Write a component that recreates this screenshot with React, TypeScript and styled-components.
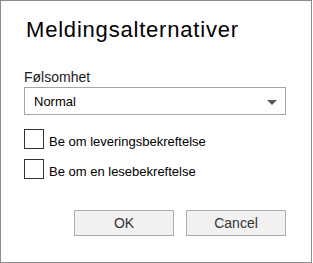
import React from "react";
import styled, { createGlobalStyle } from "styled-components";

const Global = createGlobalStyle`
  html, body { margin: 0; padding: 0; background: #fff; }
  body { font-family: "Liberation Sans", Arial, sans-serif; }
`;

const Dialog = styled.div`
  box-sizing: border-box;
  width: 312px;
  height: 263px;
  border: 1px solid #8c8c8c;
  background: #fff;
  padding: 16px 25px 0 23px;
  display: flex;
  flex-direction: column;
`;

const Title = styled.h1`
  margin: 0 0 0 2px;
  font-size: 22px;
  line-height: 26px;
  font-weight: 400;
  letter-spacing: 0.8px;
  color: #000;
`;

const Label = styled.div`
  margin-top: 26px;
  font-size: 14px;
  line-height: 16px;
  color: #1a1a1a;
`;

const Select = styled.div`
  box-sizing: border-box;
  margin-top: 2px;
  height: 28px;
  border: 1px solid #a6a6a6;
  display: flex;
  align-items: center;
  justify-content: space-between;
  padding: 1px 8px 0 9px;
  font-size: 13px;
  color: #000;
`;

const Arrow = styled.span`
  width: 0;
  height: 0;
  border-left: 5px solid transparent;
  border-right: 5px solid transparent;
  border-top: 5px solid #595959;
  margin-top: 2px;
`;

const Options = styled.div`
  margin-top: 14px;
  display: flex;
  flex-direction: column;
  gap: 10px;
`;

const CheckRow = styled.label`
  display: flex;
  align-items: center;
  gap: 5px;
  height: 20px;
  font-size: 13px;
  color: #000;
`;

const Box = styled.span`
  box-sizing: border-box;
  width: 20px;
  height: 20px;
  border: 1px solid #333;
  background: #fff;
  flex: none;
`;

const CheckText = styled.span`
  padding-top: 4px;
`;

const Buttons = styled.div`
  margin-top: 31px;
  display: flex;
  justify-content: flex-end;
  gap: 12px;
`;

const Button = styled.button`
  box-sizing: border-box;
  width: 100px;
  height: 26px;
  border: 1px solid #adadad;
  background: #f2f1f0;
  font-family: "Liberation Sans", Arial, sans-serif;
  font-size: 14px;
  color: #333;
  padding: 0;
`;

export default function App() {
  return (
    <>
      <Global />
      <Dialog>
        <Title>Meldingsalternativer</Title>
        <Label>Følsomhet</Label>
        <Select>
          <span>Normal</span>
          <Arrow />
        </Select>
        <Options>
          <CheckRow>
            <Box />
            <CheckText>Be om leveringsbekreftelse</CheckText>
          </CheckRow>
          <CheckRow>
            <Box />
            <CheckText>Be om en lesebekreftelse</CheckText>
          </CheckRow>
        </Options>
        <Buttons>
          <Button>OK</Button>
          <Button>Cancel</Button>
        </Buttons>
      </Dialog>
    </>
  );
}
